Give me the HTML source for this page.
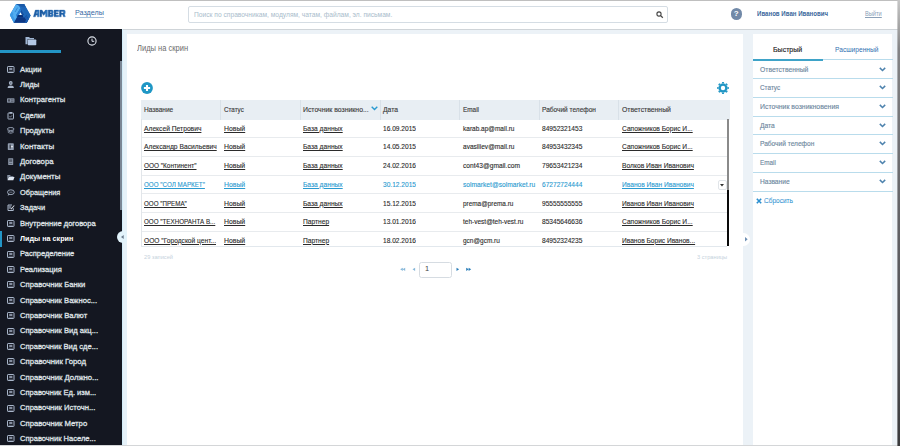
<!DOCTYPE html>
<html><head><meta charset="utf-8"><title>Amber</title>
<style>
html,body{margin:0;padding:0}
body{width:900px;height:446px;overflow:hidden;background:#ecf2f7;font-family:"Liberation Sans",sans-serif;position:relative;color:#333}
*{box-sizing:border-box}
.abs{position:absolute}
#hdr{left:0;top:0;width:900px;height:29.6px;background:#fff;border-top:1px solid #bfbfbf;border-bottom:1px solid #cfd4d8}
#side{left:0;top:29px;width:121.8px;height:415.5px;background:#141721}
.si{position:absolute;left:19.3px;font-size:8px;font-weight:bold;color:#e4e6ea;white-space:nowrap;line-height:10px;height:10px;transform:scaleX(0.876);transform-origin:0 50%}
.si.act{color:#fff}
.ic{position:absolute;left:7px;width:6px;height:7px;border:1px solid #b8c4d4;border-radius:1px}
#main{left:127px;top:33.6px;width:616px;height:411.2px;background:#fff}
#right{left:753px;top:33.6px;width:139.2px;height:411.2px;background:#fff}
.th{position:absolute;top:100px;height:18.8px;font-size:7px;line-height:18.8px;color:#444;white-space:nowrap;padding-left:3px;border-left:1px solid #dde4ea}
.td{position:absolute;font-size:7px;line-height:10px;color:#333;white-space:nowrap}
.td u{text-decoration:underline}
.rl{position:absolute;left:141px;width:586px;height:1px;background:#e8ebee}
.sel{color:#2a9ad0}
.fl{position:absolute;left:753px;width:140px;height:1px;background:#b9dcec}
.ft{position:absolute;left:760px;font-size:7px;color:#6f8fa6;line-height:10px;white-space:nowrap}
</style></head><body>

<div id="hdr" class="abs"></div>
<svg class="abs" style="left:0;top:0" width="80" height="29" viewBox="0 0 80 29">
<defs><linearGradient id="ag" x1="0" x2="1" y1="0" y2="0"><stop offset="0" stop-color="#1c579b"/><stop offset="0.7" stop-color="#2265ad"/><stop offset="1" stop-color="#3585cf"/></linearGradient></defs>
<polygon points="16.1,4.1 24.1,4.1 30.6,15.4 26.8,22.8 13.9,22.8 9.9,14.9" fill="#1f69bb"/>
<polygon points="16.1,4.1 9.9,14.9 13.9,22.8 16.9,17.6 16.3,15 20.4,8.2 18.6,5.2" fill="#52adf1"/>
<polygon points="11.9,11.5 9.9,14.9 13.9,22.8 15.3,20.4 12.7,15.2 13.5,13.9" fill="#3d9ae6"/>
<polygon points="16.1,4.1 24.1,4.1 30.6,15.4 28.6,19.2 26.3,15.2 21.6,6.8 18.6,5.2" fill="#1d66b8"/>
<polygon points="24.1,4.1 25.6,6.8 21.6,6.8 18.6,5.2 16.1,4.1" fill="#1a5aa8"/>
<polygon points="13.9,22.8 26.8,22.8 28.6,19.2 26.3,15.2 24.4,17.6 16.9,17.6" fill="#0d3784"/>
<polygon points="18.2,15 22.6,15 23.4,17.6 16.9,17.6" fill="#0a2f78"/>
<polygon points="24.4,17.6 26.3,15.2 28.6,19.2 26.8,22.8 24.8,22.8 26,19.8" fill="#1b5db2"/>
<polygon points="16.3,15 20.4,8.2 21.4,10 19.4,15" fill="#2b80d6"/><polygon points="20.4,8.2 24.2,15 22.2,15 20.6,11.6 21,10.4" fill="#174f9e"/>
<polygon points="20.5,12.3 21.8,15 19.1,15" fill="#ffffff"/>
<path d="M17.6,7.6 L15.1,12" stroke="#2474c8" stroke-width="0.6"/>
<g fill="url(#ag)" fill-rule="evenodd" stroke="#2060a8" stroke-width="0.35" stroke-linejoin="miter">
<path d="M33.4,16.8 L35.3,10.1 L39.2,10.1 L39.2,16.8 L37.4,16.8 L37.4,15.1 L35.9,15.1 L35.4,16.8 Z M36.3,13.6 L36.9,11.6 L37.4,11.6 L37.4,13.6 Z"/>
<path d="M40,16.8 V10.1 H42 L43.7,12.6 L45.4,10.1 H47.4 V16.8 H45.6 V13.1 L43.7,15.5 L41.8,13.1 V16.8 Z"/>
<path d="M48.2,10.1 H52.4 L53.2,10.9 V12.8 L52.7,13.4 L53.2,14 V16 L52.4,16.8 H48.2 Z M50,11.6 H51.5 V12.8 H50 Z M50,14.1 H51.5 V15.3 H50 Z"/>
<path d="M54.1,10.1 H58.7 V11.6 H55.9 V12.8 H58.2 V14.1 H55.9 V15.3 H58.7 V16.8 H54.1 Z"/>
<path d="M59.4,10.1 H64.4 L65.2,10.9 V13.5 L64.5,14.1 L65.3,16.8 H63.4 L62.8,14.5 H61.2 V16.8 H59.4 Z M61.2,11.6 H63.4 V13.1 H61.2 Z"/>
</g>
</svg>
<div class="abs" style="left:75px;top:9.2px;font-size:7.2px;line-height:7.6px;color:#3567a4;border-bottom:1px solid #a9c3dd">Разделы</div>
<div class="abs" style="left:187.5px;top:5.8px;width:480.7px;height:17.4px;border:1px solid #d5dde4;border-radius:2px;background:#fff"></div>
<div id="t1" class="abs" style="left:194.30px;top:9.60px;font-size:7.2px;line-height:10px;height:10px;color:#a9bccb;white-space:nowrap;transform:scaleX(0.9272);transform-origin:0 50%;">Поиск по справочникам, модулям, чатам, файлам, эл. письмам.</div>
<svg class="abs" style="left:656px;top:10.5px" width="8" height="8" viewBox="0 0 8 8"><circle cx="3" cy="3" r="2.1" fill="none" stroke="#444" stroke-width="1.1"/><line x1="4.6" y1="4.6" x2="6.8" y2="6.8" stroke="#444" stroke-width="1.3"/></svg>
<div class="abs" style="left:730.5px;top:8px;width:11.5px;height:11.5px;border-radius:50%;background:#7189a8;color:#fff;font-size:8px;font-weight:bold;line-height:11.5px;text-align:center">?</div>
<div id="t2" class="abs" style="left:756.80px;top:8.90px;font-size:7.4px;line-height:10px;height:10px;color:#3c689c;white-space:nowrap;transform:scaleX(0.8261);transform-origin:0 50%;font-weight:bold;">Иванов Иван Иванович</div>
<div id="t3" class="abs" style="left:865.40px;top:8.90px;font-size:7px;line-height:10px;height:10px;color:#8aa0b8;white-space:nowrap;transform:scaleX(0.8102);transform-origin:0 50%;text-decoration:underline;text-decoration-thickness:0.6px;text-underline-offset:0.8px;">Выйти</div>
<div id="side" class="abs"></div>
<svg class="abs" style="left:24.5px;top:35.5px" width="12" height="10" viewBox="0 0 12 10"><path d="M0.5,1 h3.5 l1,1 h4 v1.2 h-6.5 v5 h-2 z" fill="#9fb6d4"/><rect x="2.8" y="3.5" width="8.5" height="5.8" rx="0.8" fill="#b4c9e6"/></svg>
<svg class="abs" style="left:86.5px;top:35.5px" width="10" height="10" viewBox="0 0 10 10"><circle cx="5" cy="5" r="4.1" fill="none" stroke="#dde2ea" stroke-width="1.1"/><path d="M5,2.6 V5.3 H7.2" fill="none" stroke="#dde2ea" stroke-width="1"/></svg>
<div class="abs" style="left:0;top:50px;width:61px;height:2.5px;background:#2395c6"></div>
<div class="abs" style="left:119.9px;top:61.4px;width:1.9px;height:149px;background:#7b8795"></div>
<div id="t4" class="abs" style="left:19.70px;top:64.60px;font-size:7.6px;line-height:10px;height:10px;color:#dfe1e5;white-space:nowrap;transform:scaleX(1.0125);transform-origin:0 50%;-webkit-text-stroke:0.3px #dfe1e5;">Акции</div>
<svg class="abs" style="left:6.8px;top:65.80px" width="8" height="7.5" viewBox="0 0 8 7.5"><rect x="0.5" y="0.5" width="6.5" height="6" rx="0.6" fill="none" stroke="#a9b6ca" stroke-width="1"/><rect x="2.2" y="1.8" width="3.2" height="2.2" fill="#a9b6ca" opacity="0.75"/><rect x="1.5" y="4.8" width="4.5" height="0.8" fill="#a9b6ca" opacity="0.6"/></svg>
<div id="t5" class="abs" style="left:19.70px;top:80.00px;font-size:7.6px;line-height:10px;height:10px;color:#dfe1e5;white-space:nowrap;transform:scaleX(1.0144);transform-origin:0 50%;-webkit-text-stroke:0.3px #dfe1e5;">Лиды</div>
<svg class="abs" style="left:6.8px;top:81.20px" width="8" height="7.5" viewBox="0 0 8 7.5"><circle cx="3.75" cy="2" r="1.9" fill="#a9b6ca"/><circle cx="3.75" cy="2" r="0.8" fill="#15171e" opacity="0.5"/><path d="M0.6,7 Q0.8,4.6 3.75,4.6 Q6.7,4.6 6.9,7 Z" fill="#a9b6ca"/></svg>
<div id="t6" class="abs" style="left:19.70px;top:95.40px;font-size:7.6px;line-height:10px;height:10px;color:#dfe1e5;white-space:nowrap;transform:scaleX(1.0104);transform-origin:0 50%;-webkit-text-stroke:0.3px #dfe1e5;">Контрагенты</div>
<svg class="abs" style="left:6.8px;top:96.60px" width="8" height="7.5" viewBox="0 0 8 7.5"><rect x="0" y="1.3" width="7.5" height="4.4" rx="0.6" fill="#a9b6ca" opacity="0.75"/><rect x="1" y="2.3" width="2" height="2.2" fill="#15171e" opacity="0.55"/><rect x="4" y="2.5" width="2.5" height="0.7" fill="#15171e" opacity="0.5"/><rect x="4" y="3.9" width="2.5" height="0.7" fill="#15171e" opacity="0.5"/></svg>
<div id="t7" class="abs" style="left:19.70px;top:110.80px;font-size:7.6px;line-height:10px;height:10px;color:#dfe1e5;white-space:nowrap;transform:scaleX(0.9695);transform-origin:0 50%;-webkit-text-stroke:0.3px #dfe1e5;">Сделки</div>
<svg class="abs" style="left:6.8px;top:112.00px" width="8" height="7.5" viewBox="0 0 8 7.5"><rect x="1" y="1" width="5.5" height="6" rx="0.5" fill="none" stroke="#a9b6ca" stroke-width="1"/><rect x="2.5" y="0" width="2.5" height="1.6" fill="#a9b6ca"/><path d="M2.6,4.4 L3.4,5.2 L5,3.4" fill="none" stroke="#a9b6ca" stroke-width="0.7"/></svg>
<div id="t8" class="abs" style="left:19.70px;top:126.20px;font-size:7.6px;line-height:10px;height:10px;color:#dfe1e5;white-space:nowrap;transform:scaleX(0.9938);transform-origin:0 50%;-webkit-text-stroke:0.3px #dfe1e5;">Продукты</div>
<svg class="abs" style="left:6.8px;top:127.40px" width="8" height="7.5" viewBox="0 0 8 7.5"><ellipse cx="3.75" cy="2" rx="3.3" ry="1.5" fill="none" stroke="#a9b6ca" stroke-width="0.9" opacity="0.9"/><path d="M0.5,3.8 Q3.75,6.2 7,3.8" fill="none" stroke="#a9b6ca" stroke-width="0.9" opacity="0.85"/><path d="M0.8,5.3 Q3.75,7.6 6.7,5.3" fill="none" stroke="#a9b6ca" stroke-width="0.9" opacity="0.7"/></svg>
<div id="t9" class="abs" style="left:19.70px;top:141.60px;font-size:7.6px;line-height:10px;height:10px;color:#dfe1e5;white-space:nowrap;transform:scaleX(1.0392);transform-origin:0 50%;-webkit-text-stroke:0.3px #dfe1e5;">Контакты</div>
<svg class="abs" style="left:6.8px;top:142.80px" width="8" height="7.5" viewBox="0 0 8 7.5"><rect x="0.8" y="0.3" width="6" height="6.8" rx="0.8" fill="#a9b6ca" opacity="0.85"/><rect x="2.4" y="1.6" width="1.6" height="4" fill="#15171e" opacity="0.55"/><rect x="4" y="3" width="2" height="1.2" fill="#fff" opacity="0.7"/></svg>
<div id="t10" class="abs" style="left:19.70px;top:157.00px;font-size:7.6px;line-height:10px;height:10px;color:#dfe1e5;white-space:nowrap;transform:scaleX(1.0180);transform-origin:0 50%;-webkit-text-stroke:0.3px #dfe1e5;">Договора</div>
<svg class="abs" style="left:6.8px;top:158.20px" width="8" height="7.5" viewBox="0 0 8 7.5"><rect x="1.2" y="0.3" width="5" height="6.8" rx="0.5" fill="#a9b6ca" opacity="0.8"/><rect x="2.2" y="1.3" width="3" height="2.6" fill="#15171e" opacity="0.45"/><rect x="2.2" y="5" width="3" height="0.8" fill="#15171e" opacity="0.45"/></svg>
<div id="t11" class="abs" style="left:19.70px;top:172.40px;font-size:7.6px;line-height:10px;height:10px;color:#dfe1e5;white-space:nowrap;transform:scaleX(1.0292);transform-origin:0 50%;-webkit-text-stroke:0.3px #dfe1e5;">Документы</div>
<svg class="abs" style="left:6.8px;top:173.60px" width="8" height="7.5" viewBox="0 0 8 7.5"><path d="M0.3,1 H3 L3.8,1.9 H6.4 V2.7 H1.5 L0.3,6 Z" fill="#a9b6ca" opacity="0.8"/><path d="M1.7,3 H7.5 L6.3,6.3 H0.5 Z" fill="#dfe7f3"/></svg>
<div id="t12" class="abs" style="left:19.70px;top:187.80px;font-size:7.6px;line-height:10px;height:10px;color:#dfe1e5;white-space:nowrap;transform:scaleX(0.9678);transform-origin:0 50%;-webkit-text-stroke:0.3px #dfe1e5;">Обращения</div>
<svg class="abs" style="left:6.8px;top:189.00px" width="8" height="7.5" viewBox="0 0 8 7.5"><ellipse cx="3.9" cy="3.2" rx="3.4" ry="2.4" fill="none" stroke="#a9b6ca" stroke-width="0.9"/><path d="M1.5,4.8 L0.6,6.8 L3,5.5 Z" fill="#a9b6ca"/><path d="M2.3,3.2 H5.5" stroke="#a9b6ca" stroke-width="0.7" opacity="0.8"/></svg>
<div id="t13" class="abs" style="left:19.70px;top:203.20px;font-size:7.6px;line-height:10px;height:10px;color:#dfe1e5;white-space:nowrap;transform:scaleX(0.9843);transform-origin:0 50%;-webkit-text-stroke:0.3px #dfe1e5;">Задачи</div>
<svg class="abs" style="left:6.8px;top:204.40px" width="8" height="7.5" viewBox="0 0 8 7.5"><path d="M5,1 H1 V6.5 H6.3 V4.2" fill="none" stroke="#a9b6ca" stroke-width="1"/><rect x="1.6" y="1.6" width="2.6" height="3.2" fill="#a9b6ca" opacity="0.6"/><path d="M3.6,4.9 L7,1.2 L7.6,1.8 L4.3,5.5 Z" fill="#e8eef8"/></svg>
<div id="t14" class="abs" style="left:19.70px;top:218.60px;font-size:7.6px;line-height:10px;height:10px;color:#dfe1e5;white-space:nowrap;transform:scaleX(0.9954);transform-origin:0 50%;-webkit-text-stroke:0.3px #dfe1e5;">Внутренние договора</div>
<svg class="abs" style="left:6.8px;top:219.80px" width="8" height="7.5" viewBox="0 0 8 7.5"><rect x="0.5" y="0.5" width="6.5" height="6" rx="0.6" fill="none" stroke="#a9b6ca" stroke-width="1"/><rect x="2.2" y="1.8" width="3.2" height="2.2" fill="#a9b6ca" opacity="0.75"/><rect x="1.5" y="4.8" width="4.5" height="0.8" fill="#a9b6ca" opacity="0.6"/></svg>
<div id="t15" class="abs" style="left:19.70px;top:234.00px;font-size:7.6px;line-height:10px;height:10px;color:#ffffff;white-space:nowrap;transform:scaleX(0.9476);transform-origin:0 50%;font-weight:bold;">Лиды на скрин</div>
<svg class="abs" style="left:6.8px;top:235.20px" width="8" height="7.5" viewBox="0 0 8 7.5"><rect x="0.5" y="0.5" width="6.5" height="6" rx="0.6" fill="none" stroke="#a9b6ca" stroke-width="1"/><rect x="2.2" y="1.8" width="3.2" height="2.2" fill="#a9b6ca" opacity="0.75"/><rect x="1.5" y="4.8" width="4.5" height="0.8" fill="#a9b6ca" opacity="0.6"/></svg>
<div id="t16" class="abs" style="left:19.70px;top:249.40px;font-size:7.6px;line-height:10px;height:10px;color:#dfe1e5;white-space:nowrap;transform:scaleX(0.9881);transform-origin:0 50%;-webkit-text-stroke:0.3px #dfe1e5;">Распределение</div>
<svg class="abs" style="left:6.8px;top:250.60px" width="8" height="7.5" viewBox="0 0 8 7.5"><rect x="0.5" y="0.5" width="6.5" height="6" rx="0.6" fill="none" stroke="#a9b6ca" stroke-width="1"/><rect x="2.2" y="1.8" width="3.2" height="2.2" fill="#a9b6ca" opacity="0.75"/><rect x="1.5" y="4.8" width="4.5" height="0.8" fill="#a9b6ca" opacity="0.6"/></svg>
<div id="t17" class="abs" style="left:19.70px;top:264.80px;font-size:7.6px;line-height:10px;height:10px;color:#dfe1e5;white-space:nowrap;transform:scaleX(0.9890);transform-origin:0 50%;-webkit-text-stroke:0.3px #dfe1e5;">Реализация</div>
<svg class="abs" style="left:6.8px;top:266.00px" width="8" height="7.5" viewBox="0 0 8 7.5"><rect x="0.5" y="0.5" width="6.5" height="6" rx="0.6" fill="none" stroke="#a9b6ca" stroke-width="1"/><rect x="2.2" y="1.8" width="3.2" height="2.2" fill="#a9b6ca" opacity="0.75"/><rect x="1.5" y="4.8" width="4.5" height="0.8" fill="#a9b6ca" opacity="0.6"/></svg>
<div id="t18" class="abs" style="left:19.70px;top:280.20px;font-size:7.6px;line-height:10px;height:10px;color:#dfe1e5;white-space:nowrap;transform:scaleX(1.0086);transform-origin:0 50%;-webkit-text-stroke:0.3px #dfe1e5;">Справочник Банки</div>
<svg class="abs" style="left:6.8px;top:281.40px" width="8" height="7.5" viewBox="0 0 8 7.5"><rect x="0.5" y="0.5" width="6.5" height="6" rx="0.6" fill="none" stroke="#a9b6ca" stroke-width="1"/><rect x="2.2" y="1.8" width="3.2" height="2.2" fill="#a9b6ca" opacity="0.75"/><rect x="1.5" y="4.8" width="4.5" height="0.8" fill="#a9b6ca" opacity="0.6"/></svg>
<div id="t19" class="abs" style="left:19.70px;top:295.60px;font-size:7.6px;line-height:10px;height:10px;color:#dfe1e5;white-space:nowrap;transform:scaleX(1.0039);transform-origin:0 50%;-webkit-text-stroke:0.3px #dfe1e5;">Справочник Важнос...</div>
<svg class="abs" style="left:6.8px;top:296.80px" width="8" height="7.5" viewBox="0 0 8 7.5"><rect x="0.5" y="0.5" width="6.5" height="6" rx="0.6" fill="none" stroke="#a9b6ca" stroke-width="1"/><rect x="2.2" y="1.8" width="3.2" height="2.2" fill="#a9b6ca" opacity="0.75"/><rect x="1.5" y="4.8" width="4.5" height="0.8" fill="#a9b6ca" opacity="0.6"/></svg>
<div id="t20" class="abs" style="left:19.70px;top:311.00px;font-size:7.6px;line-height:10px;height:10px;color:#dfe1e5;white-space:nowrap;transform:scaleX(1.0089);transform-origin:0 50%;-webkit-text-stroke:0.3px #dfe1e5;">Справочник Валют</div>
<svg class="abs" style="left:6.8px;top:312.20px" width="8" height="7.5" viewBox="0 0 8 7.5"><rect x="0.5" y="0.5" width="6.5" height="6" rx="0.6" fill="none" stroke="#a9b6ca" stroke-width="1"/><rect x="2.2" y="1.8" width="3.2" height="2.2" fill="#a9b6ca" opacity="0.75"/><rect x="1.5" y="4.8" width="4.5" height="0.8" fill="#a9b6ca" opacity="0.6"/></svg>
<div id="t21" class="abs" style="left:19.70px;top:326.40px;font-size:7.6px;line-height:10px;height:10px;color:#dfe1e5;white-space:nowrap;transform:scaleX(1.0006);transform-origin:0 50%;-webkit-text-stroke:0.3px #dfe1e5;">Справочник Вид акц...</div>
<svg class="abs" style="left:6.8px;top:327.60px" width="8" height="7.5" viewBox="0 0 8 7.5"><rect x="0.5" y="0.5" width="6.5" height="6" rx="0.6" fill="none" stroke="#a9b6ca" stroke-width="1"/><rect x="2.2" y="1.8" width="3.2" height="2.2" fill="#a9b6ca" opacity="0.75"/><rect x="1.5" y="4.8" width="4.5" height="0.8" fill="#a9b6ca" opacity="0.6"/></svg>
<div id="t22" class="abs" style="left:19.70px;top:341.80px;font-size:7.6px;line-height:10px;height:10px;color:#dfe1e5;white-space:nowrap;transform:scaleX(0.9936);transform-origin:0 50%;-webkit-text-stroke:0.3px #dfe1e5;">Справочник Вид сде...</div>
<svg class="abs" style="left:6.8px;top:343.00px" width="8" height="7.5" viewBox="0 0 8 7.5"><rect x="0.5" y="0.5" width="6.5" height="6" rx="0.6" fill="none" stroke="#a9b6ca" stroke-width="1"/><rect x="2.2" y="1.8" width="3.2" height="2.2" fill="#a9b6ca" opacity="0.75"/><rect x="1.5" y="4.8" width="4.5" height="0.8" fill="#a9b6ca" opacity="0.6"/></svg>
<div id="t23" class="abs" style="left:19.70px;top:357.20px;font-size:7.6px;line-height:10px;height:10px;color:#dfe1e5;white-space:nowrap;transform:scaleX(1.0245);transform-origin:0 50%;-webkit-text-stroke:0.3px #dfe1e5;">Справочник Город</div>
<svg class="abs" style="left:6.8px;top:358.40px" width="8" height="7.5" viewBox="0 0 8 7.5"><rect x="0.5" y="0.5" width="6.5" height="6" rx="0.6" fill="none" stroke="#a9b6ca" stroke-width="1"/><rect x="2.2" y="1.8" width="3.2" height="2.2" fill="#a9b6ca" opacity="0.75"/><rect x="1.5" y="4.8" width="4.5" height="0.8" fill="#a9b6ca" opacity="0.6"/></svg>
<div id="t24" class="abs" style="left:19.70px;top:372.60px;font-size:7.6px;line-height:10px;height:10px;color:#dfe1e5;white-space:nowrap;transform:scaleX(1.0139);transform-origin:0 50%;-webkit-text-stroke:0.3px #dfe1e5;">Справочник Должно...</div>
<svg class="abs" style="left:6.8px;top:373.80px" width="8" height="7.5" viewBox="0 0 8 7.5"><rect x="0.5" y="0.5" width="6.5" height="6" rx="0.6" fill="none" stroke="#a9b6ca" stroke-width="1"/><rect x="2.2" y="1.8" width="3.2" height="2.2" fill="#a9b6ca" opacity="0.75"/><rect x="1.5" y="4.8" width="4.5" height="0.8" fill="#a9b6ca" opacity="0.6"/></svg>
<div id="t25" class="abs" style="left:19.70px;top:388.00px;font-size:7.6px;line-height:10px;height:10px;color:#dfe1e5;white-space:nowrap;transform:scaleX(0.9912);transform-origin:0 50%;-webkit-text-stroke:0.3px #dfe1e5;">Справочник Ед. изм...</div>
<svg class="abs" style="left:6.8px;top:389.20px" width="8" height="7.5" viewBox="0 0 8 7.5"><rect x="0.5" y="0.5" width="6.5" height="6" rx="0.6" fill="none" stroke="#a9b6ca" stroke-width="1"/><rect x="2.2" y="1.8" width="3.2" height="2.2" fill="#a9b6ca" opacity="0.75"/><rect x="1.5" y="4.8" width="4.5" height="0.8" fill="#a9b6ca" opacity="0.6"/></svg>
<div id="t26" class="abs" style="left:19.70px;top:403.40px;font-size:7.6px;line-height:10px;height:10px;color:#dfe1e5;white-space:nowrap;transform:scaleX(1.0032);transform-origin:0 50%;-webkit-text-stroke:0.3px #dfe1e5;">Справочник Источн...</div>
<svg class="abs" style="left:6.8px;top:404.60px" width="8" height="7.5" viewBox="0 0 8 7.5"><rect x="0.5" y="0.5" width="6.5" height="6" rx="0.6" fill="none" stroke="#a9b6ca" stroke-width="1"/><rect x="2.2" y="1.8" width="3.2" height="2.2" fill="#a9b6ca" opacity="0.75"/><rect x="1.5" y="4.8" width="4.5" height="0.8" fill="#a9b6ca" opacity="0.6"/></svg>
<div id="t27" class="abs" style="left:19.70px;top:418.80px;font-size:7.6px;line-height:10px;height:10px;color:#dfe1e5;white-space:nowrap;transform:scaleX(1.0153);transform-origin:0 50%;-webkit-text-stroke:0.3px #dfe1e5;">Справочник Метро</div>
<svg class="abs" style="left:6.8px;top:420.00px" width="8" height="7.5" viewBox="0 0 8 7.5"><rect x="0.5" y="0.5" width="6.5" height="6" rx="0.6" fill="none" stroke="#a9b6ca" stroke-width="1"/><rect x="2.2" y="1.8" width="3.2" height="2.2" fill="#a9b6ca" opacity="0.75"/><rect x="1.5" y="4.8" width="4.5" height="0.8" fill="#a9b6ca" opacity="0.6"/></svg>
<div id="t28" class="abs" style="left:19.70px;top:434.20px;font-size:7.6px;line-height:10px;height:10px;color:#dfe1e5;white-space:nowrap;transform:scaleX(0.9929);transform-origin:0 50%;-webkit-text-stroke:0.3px #dfe1e5;">Справочник Населе...</div>
<svg class="abs" style="left:6.8px;top:435.40px" width="8" height="7.5" viewBox="0 0 8 7.5"><rect x="0.5" y="0.5" width="6.5" height="6" rx="0.6" fill="none" stroke="#a9b6ca" stroke-width="1"/><rect x="2.2" y="1.8" width="3.2" height="2.2" fill="#a9b6ca" opacity="0.75"/><rect x="1.5" y="4.8" width="4.5" height="0.8" fill="#a9b6ca" opacity="0.6"/></svg>
<div class="abs" style="left:0;top:231.00px;width:2.2px;height:15.6px;background:#2395c6"></div>
<div class="abs" style="left:121.8px;top:30px;width:5.2px;height:415px;background:#e6f2f9"></div>
<div class="abs" style="left:121.8px;top:29px;width:1.6px;height:416px;background:#d3edf9"></div>
<div class="abs" style="left:117.1px;top:230.8px;width:12.4px;height:12.4px;border-radius:50%;background:#e2f3fb"></div>
<svg class="abs" style="left:120.6px;top:235.3px" width="3" height="4" viewBox="0 0 3 4"><path d="M2.7,0 L0,2 L2.7,4 Z" fill="#6a7a8c"/></svg>
<div id="main" class="abs"></div>
<div id="t29" class="abs" style="left:136.70px;top:43.60px;font-size:8.2px;line-height:10px;height:10px;color:#6c6c6c;white-space:nowrap;transform:scaleX(0.9215);transform-origin:0 50%;">Лиды на скрин</div>
<svg class="abs" style="left:141.3px;top:81.7px" width="12" height="12" viewBox="0 0 12 12"><circle cx="6" cy="6" r="5.9" fill="#1f97c5"/><path d="M6,2.9 V9.1 M2.9,6 H9.1" stroke="#fff" stroke-width="2.1"/></svg>
<svg class="abs" style="left:717.25px;top:81.8px" width="12" height="12" viewBox="0 0 12 12"><g fill="#2196c4"><circle cx="6" cy="6" r="4.5"/><polygon points="4.7,1.6 5.2,0.1 6.8,0.1 7.3,1.6" transform="rotate(0 6 6)"/><polygon points="4.7,1.6 5.2,0.1 6.8,0.1 7.3,1.6" transform="rotate(45 6 6)"/><polygon points="4.7,1.6 5.2,0.1 6.8,0.1 7.3,1.6" transform="rotate(90 6 6)"/><polygon points="4.7,1.6 5.2,0.1 6.8,0.1 7.3,1.6" transform="rotate(135 6 6)"/><polygon points="4.7,1.6 5.2,0.1 6.8,0.1 7.3,1.6" transform="rotate(180 6 6)"/><polygon points="4.7,1.6 5.2,0.1 6.8,0.1 7.3,1.6" transform="rotate(225 6 6)"/><polygon points="4.7,1.6 5.2,0.1 6.8,0.1 7.3,1.6" transform="rotate(270 6 6)"/><polygon points="4.7,1.6 5.2,0.1 6.8,0.1 7.3,1.6" transform="rotate(315 6 6)"/></g><circle cx="6" cy="6" r="2.2" fill="#fff"/></svg>
<div class="abs" style="left:141px;top:99.7px;width:588.8px;height:19.9px;background:#e8eef3"></div>
<div class="abs" style="left:220.4px;top:99.7px;width:1px;height:19.9px;background:#d9e1e8"></div>
<div class="abs" style="left:299.7px;top:99.7px;width:1px;height:19.9px;background:#d9e1e8"></div>
<div class="abs" style="left:379.7px;top:99.7px;width:1px;height:19.9px;background:#d9e1e8"></div>
<div class="abs" style="left:459.4px;top:99.7px;width:1px;height:19.9px;background:#d9e1e8"></div>
<div class="abs" style="left:538.5px;top:99.7px;width:1px;height:19.9px;background:#d9e1e8"></div>
<div class="abs" style="left:617.7px;top:99.7px;width:1px;height:19.9px;background:#d9e1e8"></div>
<div id="t30" class="abs" style="left:144.40px;top:105.10px;font-size:7.4px;line-height:10px;height:10px;color:#3c3c3c;white-space:nowrap;transform:scaleX(0.8840);transform-origin:0 50%;-webkit-text-stroke:0.15px #3c3c3c;">Название</div>
<div id="t31" class="abs" style="left:224.00px;top:105.10px;font-size:7.4px;line-height:10px;height:10px;color:#3c3c3c;white-space:nowrap;transform:scaleX(0.8471);transform-origin:0 50%;-webkit-text-stroke:0.15px #3c3c3c;">Статус</div>
<div id="t32" class="abs" style="left:303.30px;top:105.10px;font-size:7.4px;line-height:10px;height:10px;color:#3c3c3c;white-space:nowrap;transform:scaleX(0.9296);transform-origin:0 50%;-webkit-text-stroke:0.15px #3c3c3c;">Источник возникно...</div>
<div id="t33" class="abs" style="left:383.00px;top:105.10px;font-size:7.4px;line-height:10px;height:10px;color:#3c3c3c;white-space:nowrap;transform:scaleX(0.9160);transform-origin:0 50%;-webkit-text-stroke:0.15px #3c3c3c;">Дата</div>
<div id="t34" class="abs" style="left:462.65px;top:105.10px;font-size:7.4px;line-height:10px;height:10px;color:#3c3c3c;white-space:nowrap;transform:scaleX(0.8656);transform-origin:0 50%;-webkit-text-stroke:0.15px #3c3c3c;">Email</div>
<div id="t35" class="abs" style="left:542.30px;top:105.10px;font-size:7.4px;line-height:10px;height:10px;color:#3c3c3c;white-space:nowrap;transform:scaleX(0.8836);transform-origin:0 50%;-webkit-text-stroke:0.15px #3c3c3c;">Рабочий телефон</div>
<div id="t36" class="abs" style="left:621.80px;top:105.10px;font-size:7.4px;line-height:10px;height:10px;color:#3c3c3c;white-space:nowrap;transform:scaleX(0.9265);transform-origin:0 50%;-webkit-text-stroke:0.15px #3c3c3c;">Ответственный</div>
<svg class="abs" style="left:370.6px;top:106.4px" width="7" height="5" viewBox="0 0 7 5"><path d="M0.7,0.8 L3.5,3.6 L6.3,0.8" fill="none" stroke="#2a9ad0" stroke-width="1.4"/></svg>
<div id="t37" class="abs" style="left:144.40px;top:123.80px;font-size:7.4px;line-height:10px;height:10px;color:#2b2b2b;white-space:nowrap;transform:scaleX(0.9062);transform-origin:0 50%;text-decoration:underline;text-decoration-thickness:0.6px;text-underline-offset:0.6px;-webkit-text-stroke:0.12px #2b2b2b;">Алексей Петрович</div>
<div id="t38" class="abs" style="left:224.00px;top:123.80px;font-size:7.4px;line-height:10px;height:10px;color:#2b2b2b;white-space:nowrap;transform:scaleX(0.9287);transform-origin:0 50%;text-decoration:underline;text-decoration-thickness:0.6px;text-underline-offset:0.6px;-webkit-text-stroke:0.12px #2b2b2b;">Новый</div>
<div id="t39" class="abs" style="left:303.30px;top:123.80px;font-size:7.4px;line-height:10px;height:10px;color:#2b2b2b;white-space:nowrap;transform:scaleX(0.9016);transform-origin:0 50%;text-decoration:underline;text-decoration-thickness:0.6px;text-underline-offset:0.6px;-webkit-text-stroke:0.12px #2b2b2b;">База данных</div>
<div id="t40" class="abs" style="left:383.00px;top:123.80px;font-size:7.4px;line-height:10px;height:10px;color:#2b2b2b;white-space:nowrap;transform:scaleX(0.8919);transform-origin:0 50%;-webkit-text-stroke:0.12px #2b2b2b;">16.09.2015</div>
<div id="t41" class="abs" style="left:462.65px;top:123.80px;font-size:7.4px;line-height:10px;height:10px;color:#2b2b2b;white-space:nowrap;transform:scaleX(0.8810);transform-origin:0 50%;-webkit-text-stroke:0.12px #2b2b2b;">karab.ap@mail.ru</div>
<div id="t42" class="abs" style="left:542.30px;top:123.80px;font-size:7.4px;line-height:10px;height:10px;color:#2b2b2b;white-space:nowrap;transform:scaleX(0.8912);transform-origin:0 50%;-webkit-text-stroke:0.12px #2b2b2b;">84952321453</div>
<div id="t43" class="abs" style="left:621.80px;top:123.80px;font-size:7.4px;line-height:10px;height:10px;color:#2b2b2b;white-space:nowrap;transform:scaleX(0.9001);transform-origin:0 50%;text-decoration:underline;text-decoration-thickness:0.6px;text-underline-offset:0.6px;-webkit-text-stroke:0.12px #2b2b2b;">Сапожников Борис И...</div>
<div class="rl" style="top:137.30px"></div>
<div id="t44" class="abs" style="left:144.40px;top:142.48px;font-size:7.4px;line-height:10px;height:10px;color:#2b2b2b;white-space:nowrap;transform:scaleX(0.9079);transform-origin:0 50%;text-decoration:underline;text-decoration-thickness:0.6px;text-underline-offset:0.6px;-webkit-text-stroke:0.12px #2b2b2b;">Александр Васильевич</div>
<div id="t45" class="abs" style="left:224.00px;top:142.48px;font-size:7.4px;line-height:10px;height:10px;color:#2b2b2b;white-space:nowrap;transform:scaleX(0.9287);transform-origin:0 50%;text-decoration:underline;text-decoration-thickness:0.6px;text-underline-offset:0.6px;-webkit-text-stroke:0.12px #2b2b2b;">Новый</div>
<div id="t46" class="abs" style="left:303.30px;top:142.48px;font-size:7.4px;line-height:10px;height:10px;color:#2b2b2b;white-space:nowrap;transform:scaleX(0.9016);transform-origin:0 50%;text-decoration:underline;text-decoration-thickness:0.6px;text-underline-offset:0.6px;-webkit-text-stroke:0.12px #2b2b2b;">База данных</div>
<div id="t47" class="abs" style="left:383.00px;top:142.48px;font-size:7.4px;line-height:10px;height:10px;color:#2b2b2b;white-space:nowrap;transform:scaleX(0.8919);transform-origin:0 50%;-webkit-text-stroke:0.12px #2b2b2b;">14.05.2015</div>
<div id="t48" class="abs" style="left:462.65px;top:142.48px;font-size:7.4px;line-height:10px;height:10px;color:#2b2b2b;white-space:nowrap;transform:scaleX(0.8875);transform-origin:0 50%;-webkit-text-stroke:0.12px #2b2b2b;">avasiliev@mail.ru</div>
<div id="t49" class="abs" style="left:542.30px;top:142.48px;font-size:7.4px;line-height:10px;height:10px;color:#2b2b2b;white-space:nowrap;transform:scaleX(0.8912);transform-origin:0 50%;-webkit-text-stroke:0.12px #2b2b2b;">84953432345</div>
<div id="t50" class="abs" style="left:621.80px;top:142.48px;font-size:7.4px;line-height:10px;height:10px;color:#2b2b2b;white-space:nowrap;transform:scaleX(0.9001);transform-origin:0 50%;text-decoration:underline;text-decoration-thickness:0.6px;text-underline-offset:0.6px;-webkit-text-stroke:0.12px #2b2b2b;">Сапожников Борис И...</div>
<div class="rl" style="top:156.00px"></div>
<div id="t51" class="abs" style="left:144.40px;top:161.16px;font-size:7.4px;line-height:10px;height:10px;color:#2b2b2b;white-space:nowrap;transform:scaleX(0.8718);transform-origin:0 50%;text-decoration:underline;text-decoration-thickness:0.6px;text-underline-offset:0.6px;-webkit-text-stroke:0.12px #2b2b2b;">ООО "Континент"</div>
<div id="t52" class="abs" style="left:224.00px;top:161.16px;font-size:7.4px;line-height:10px;height:10px;color:#2b2b2b;white-space:nowrap;transform:scaleX(0.9287);transform-origin:0 50%;text-decoration:underline;text-decoration-thickness:0.6px;text-underline-offset:0.6px;-webkit-text-stroke:0.12px #2b2b2b;">Новый</div>
<div id="t53" class="abs" style="left:303.30px;top:161.16px;font-size:7.4px;line-height:10px;height:10px;color:#2b2b2b;white-space:nowrap;transform:scaleX(0.9016);transform-origin:0 50%;text-decoration:underline;text-decoration-thickness:0.6px;text-underline-offset:0.6px;-webkit-text-stroke:0.12px #2b2b2b;">База данных</div>
<div id="t54" class="abs" style="left:383.00px;top:161.16px;font-size:7.4px;line-height:10px;height:10px;color:#2b2b2b;white-space:nowrap;transform:scaleX(0.8919);transform-origin:0 50%;-webkit-text-stroke:0.12px #2b2b2b;">24.02.2016</div>
<div id="t55" class="abs" style="left:462.65px;top:161.16px;font-size:7.4px;line-height:10px;height:10px;color:#2b2b2b;white-space:nowrap;transform:scaleX(0.8994);transform-origin:0 50%;-webkit-text-stroke:0.12px #2b2b2b;">cont43@gmail.com</div>
<div id="t56" class="abs" style="left:542.30px;top:161.16px;font-size:7.4px;line-height:10px;height:10px;color:#2b2b2b;white-space:nowrap;transform:scaleX(0.8912);transform-origin:0 50%;-webkit-text-stroke:0.12px #2b2b2b;">79653421234</div>
<div id="t57" class="abs" style="left:621.80px;top:161.16px;font-size:7.4px;line-height:10px;height:10px;color:#2b2b2b;white-space:nowrap;transform:scaleX(0.9060);transform-origin:0 50%;text-decoration:underline;text-decoration-thickness:0.6px;text-underline-offset:0.6px;-webkit-text-stroke:0.12px #2b2b2b;">Волков Иван Иванович</div>
<div class="rl" style="top:174.70px"></div>
<div id="t58" class="abs" style="left:144.40px;top:179.84px;font-size:7.4px;line-height:10px;height:10px;color:#2a9ad0;white-space:nowrap;transform:scaleX(0.8451);transform-origin:0 50%;text-decoration:underline;text-decoration-thickness:0.6px;text-underline-offset:0.6px;-webkit-text-stroke:0.12px #2a9ad0;">ООО "СОЛ МАРКЕТ"</div>
<div id="t59" class="abs" style="left:224.00px;top:179.84px;font-size:7.4px;line-height:10px;height:10px;color:#2a9ad0;white-space:nowrap;transform:scaleX(0.9287);transform-origin:0 50%;text-decoration:underline;text-decoration-thickness:0.6px;text-underline-offset:0.6px;-webkit-text-stroke:0.12px #2a9ad0;">Новый</div>
<div id="t60" class="abs" style="left:303.30px;top:179.84px;font-size:7.4px;line-height:10px;height:10px;color:#2a9ad0;white-space:nowrap;transform:scaleX(0.9016);transform-origin:0 50%;text-decoration:underline;text-decoration-thickness:0.6px;text-underline-offset:0.6px;-webkit-text-stroke:0.12px #2a9ad0;">База данных</div>
<div id="t61" class="abs" style="left:383.00px;top:179.84px;font-size:7.4px;line-height:10px;height:10px;color:#2a9ad0;white-space:nowrap;transform:scaleX(0.8919);transform-origin:0 50%;-webkit-text-stroke:0.12px #2a9ad0;">30.12.2015</div>
<div id="t62" class="abs" style="left:462.65px;top:179.84px;font-size:7.4px;line-height:10px;height:10px;color:#2a9ad0;white-space:nowrap;transform:scaleX(0.9015);transform-origin:0 50%;-webkit-text-stroke:0.12px #2a9ad0;">solmarket@solmarket.ru</div>
<div id="t63" class="abs" style="left:542.30px;top:179.84px;font-size:7.4px;line-height:10px;height:10px;color:#2a9ad0;white-space:nowrap;transform:scaleX(0.8912);transform-origin:0 50%;-webkit-text-stroke:0.12px #2a9ad0;">67272724444</div>
<div id="t64" class="abs" style="left:621.80px;top:179.84px;font-size:7.4px;line-height:10px;height:10px;color:#2a9ad0;white-space:nowrap;transform:scaleX(0.8965);transform-origin:0 50%;text-decoration:underline;text-decoration-thickness:0.6px;text-underline-offset:0.6px;-webkit-text-stroke:0.12px #2a9ad0;">Иванов Иван Иванович</div>
<div class="rl" style="top:193.40px"></div>
<div id="t65" class="abs" style="left:144.40px;top:198.52px;font-size:7.4px;line-height:10px;height:10px;color:#2b2b2b;white-space:nowrap;transform:scaleX(0.8423);transform-origin:0 50%;text-decoration:underline;text-decoration-thickness:0.6px;text-underline-offset:0.6px;-webkit-text-stroke:0.12px #2b2b2b;">ООО "ПРЕМА"</div>
<div id="t66" class="abs" style="left:224.00px;top:198.52px;font-size:7.4px;line-height:10px;height:10px;color:#2b2b2b;white-space:nowrap;transform:scaleX(0.9287);transform-origin:0 50%;text-decoration:underline;text-decoration-thickness:0.6px;text-underline-offset:0.6px;-webkit-text-stroke:0.12px #2b2b2b;">Новый</div>
<div id="t67" class="abs" style="left:303.30px;top:198.52px;font-size:7.4px;line-height:10px;height:10px;color:#2b2b2b;white-space:nowrap;transform:scaleX(0.9016);transform-origin:0 50%;text-decoration:underline;text-decoration-thickness:0.6px;text-underline-offset:0.6px;-webkit-text-stroke:0.12px #2b2b2b;">База данных</div>
<div id="t68" class="abs" style="left:383.00px;top:198.52px;font-size:7.4px;line-height:10px;height:10px;color:#2b2b2b;white-space:nowrap;transform:scaleX(0.8919);transform-origin:0 50%;-webkit-text-stroke:0.12px #2b2b2b;">15.12.2015</div>
<div id="t69" class="abs" style="left:462.65px;top:198.52px;font-size:7.4px;line-height:10px;height:10px;color:#2b2b2b;white-space:nowrap;transform:scaleX(0.8685);transform-origin:0 50%;-webkit-text-stroke:0.12px #2b2b2b;">prema@prema.ru</div>
<div id="t70" class="abs" style="left:542.30px;top:198.52px;font-size:7.4px;line-height:10px;height:10px;color:#2b2b2b;white-space:nowrap;transform:scaleX(0.8912);transform-origin:0 50%;-webkit-text-stroke:0.12px #2b2b2b;">95555555555</div>
<div id="t71" class="abs" style="left:621.80px;top:198.52px;font-size:7.4px;line-height:10px;height:10px;color:#2b2b2b;white-space:nowrap;transform:scaleX(0.8965);transform-origin:0 50%;text-decoration:underline;text-decoration-thickness:0.6px;text-underline-offset:0.6px;-webkit-text-stroke:0.12px #2b2b2b;">Иванов Иван Иванович</div>
<div class="rl" style="top:212.10px"></div>
<div id="t72" class="abs" style="left:144.40px;top:217.20px;font-size:7.4px;line-height:10px;height:10px;color:#2b2b2b;white-space:nowrap;transform:scaleX(0.8444);transform-origin:0 50%;text-decoration:underline;text-decoration-thickness:0.6px;text-underline-offset:0.6px;-webkit-text-stroke:0.12px #2b2b2b;">ООО "ТЕХНОРАНТА В...</div>
<div id="t73" class="abs" style="left:224.00px;top:217.20px;font-size:7.4px;line-height:10px;height:10px;color:#2b2b2b;white-space:nowrap;transform:scaleX(0.9287);transform-origin:0 50%;text-decoration:underline;text-decoration-thickness:0.6px;text-underline-offset:0.6px;-webkit-text-stroke:0.12px #2b2b2b;">Новый</div>
<div id="t74" class="abs" style="left:303.30px;top:217.20px;font-size:7.4px;line-height:10px;height:10px;color:#2b2b2b;white-space:nowrap;transform:scaleX(0.8981);transform-origin:0 50%;text-decoration:underline;text-decoration-thickness:0.6px;text-underline-offset:0.6px;-webkit-text-stroke:0.12px #2b2b2b;">Партнер</div>
<div id="t75" class="abs" style="left:383.00px;top:217.20px;font-size:7.4px;line-height:10px;height:10px;color:#2b2b2b;white-space:nowrap;transform:scaleX(0.8919);transform-origin:0 50%;-webkit-text-stroke:0.12px #2b2b2b;">13.01.2016</div>
<div id="t76" class="abs" style="left:462.65px;top:217.20px;font-size:7.4px;line-height:10px;height:10px;color:#2b2b2b;white-space:nowrap;transform:scaleX(0.8804);transform-origin:0 50%;-webkit-text-stroke:0.12px #2b2b2b;">teh-vest@teh-vest.ru</div>
<div id="t77" class="abs" style="left:542.30px;top:217.20px;font-size:7.4px;line-height:10px;height:10px;color:#2b2b2b;white-space:nowrap;transform:scaleX(0.8912);transform-origin:0 50%;-webkit-text-stroke:0.12px #2b2b2b;">85345646636</div>
<div id="t78" class="abs" style="left:621.80px;top:217.20px;font-size:7.4px;line-height:10px;height:10px;color:#2b2b2b;white-space:nowrap;transform:scaleX(0.9001);transform-origin:0 50%;text-decoration:underline;text-decoration-thickness:0.6px;text-underline-offset:0.6px;-webkit-text-stroke:0.12px #2b2b2b;">Сапожников Борис И...</div>
<div class="rl" style="top:230.80px"></div>
<div id="t79" class="abs" style="left:144.40px;top:235.88px;font-size:7.4px;line-height:10px;height:10px;color:#2b2b2b;white-space:nowrap;transform:scaleX(0.8968);transform-origin:0 50%;text-decoration:underline;text-decoration-thickness:0.6px;text-underline-offset:0.6px;-webkit-text-stroke:0.12px #2b2b2b;">ООО "Городской цент...</div>
<div id="t80" class="abs" style="left:224.00px;top:235.88px;font-size:7.4px;line-height:10px;height:10px;color:#2b2b2b;white-space:nowrap;transform:scaleX(0.9287);transform-origin:0 50%;text-decoration:underline;text-decoration-thickness:0.6px;text-underline-offset:0.6px;-webkit-text-stroke:0.12px #2b2b2b;">Новый</div>
<div id="t81" class="abs" style="left:303.30px;top:235.88px;font-size:7.4px;line-height:10px;height:10px;color:#2b2b2b;white-space:nowrap;transform:scaleX(0.8981);transform-origin:0 50%;text-decoration:underline;text-decoration-thickness:0.6px;text-underline-offset:0.6px;-webkit-text-stroke:0.12px #2b2b2b;">Партнер</div>
<div id="t82" class="abs" style="left:383.00px;top:235.88px;font-size:7.4px;line-height:10px;height:10px;color:#2b2b2b;white-space:nowrap;transform:scaleX(0.8919);transform-origin:0 50%;-webkit-text-stroke:0.12px #2b2b2b;">18.02.2016</div>
<div id="t83" class="abs" style="left:462.65px;top:235.88px;font-size:7.4px;line-height:10px;height:10px;color:#2b2b2b;white-space:nowrap;transform:scaleX(0.8782);transform-origin:0 50%;-webkit-text-stroke:0.12px #2b2b2b;">gcn@gcm.ru</div>
<div id="t84" class="abs" style="left:542.30px;top:235.88px;font-size:7.4px;line-height:10px;height:10px;color:#2b2b2b;white-space:nowrap;transform:scaleX(0.8912);transform-origin:0 50%;-webkit-text-stroke:0.12px #2b2b2b;">84952324235</div>
<div id="t85" class="abs" style="left:621.80px;top:235.88px;font-size:7.4px;line-height:10px;height:10px;color:#2b2b2b;white-space:nowrap;transform:scaleX(0.8921);transform-origin:0 50%;text-decoration:underline;text-decoration-thickness:0.6px;text-underline-offset:0.6px;-webkit-text-stroke:0.12px #2b2b2b;">Иванов Борис Иванов...</div>
<div class="abs" style="left:127px;top:246.6px;width:616px;height:30px;background:#fff"></div>
<div class="abs" style="left:141px;top:246px;width:586px;height:1px;background:#e2e8ed"></div>
<div class="abs" style="left:140.7px;top:119px;width:1px;height:127.5px;background:#e2e6ea"></div>
<div class="abs" style="left:727px;top:119.3px;width:2.05px;height:127.2px;background:linear-gradient(to bottom,#8a8a8a 0,#8a8a8a 71.2px,#0a0a0a 71.2px,#0a0a0a 100%)"></div>
<div class="abs" style="left:717.6px;top:179.75px;width:9.3px;height:9.75px;border:1px solid #e1e5e9;border-radius:2px;background:#fff"></div>
<svg class="abs" style="left:720.4px;top:184px" width="4" height="2.6" viewBox="0 0 4 2.6"><path d="M0,0 H4 L2,2.5 Z" fill="#333"/></svg>
<div id="t86" class="abs" style="left:143.80px;top:252.40px;font-size:6.2px;line-height:10px;height:10px;color:#c6d2dc;white-space:nowrap;transform:scaleX(0.9152);transform-origin:0 50%;">29 записей</div>
<div id="t87" class="abs" style="left:696.70px;top:252.40px;font-size:6.2px;line-height:10px;height:10px;color:#c6d2dc;white-space:nowrap;transform:scaleX(0.9195);transform-origin:0 50%;">3 страницы</div>
<div class="abs" style="left:419px;top:261.5px;width:32.5px;height:16px;border:1px solid #d6dce2;border-radius:2.5px;background:#fff"></div>
<div id="t88" class="abs" style="left:425.00px;top:264.20px;font-size:7.4px;line-height:10px;height:10px;color:#444;white-space:nowrap;">1</div>
<svg class="abs" style="left:0;top:0" width="900" height="446" viewBox="0 0 900 446"><polygon points="402.8,267.7 400.2,269.3 402.8,270.90000000000003" fill="#86b7d9"/><polygon points="405.20000000000005,267.7 402.6,269.3 405.20000000000005,270.90000000000003" fill="#86b7d9"/><polygon points="415.1,267.7 412.5,269.3 415.1,270.90000000000003" fill="#86b7d9"/><polygon points="456.5,267.7 459.1,269.3 456.5,270.90000000000003" fill="#2a7db8"/><polygon points="466.2,267.7 468.8,269.3 466.2,270.90000000000003" fill="#2a7db8"/><polygon points="468.6,267.7 471.20000000000005,269.3 468.6,270.90000000000003" fill="#2a7db8"/></svg>
<div class="abs" style="left:737.1px;top:232.6px;width:13.4px;height:13.4px;border-radius:50%;background:#fff"></div>
<svg class="abs" style="left:744.9px;top:237.4px" width="2.8" height="4.4" viewBox="0 0 2.8 4.4"><path d="M0,0 L2.7,2.2 L0,4.4 Z" fill="#6f90b4"/></svg>
<div id="right" class="abs"></div>
<div id="t89" class="abs" style="left:773.00px;top:44.50px;font-size:7.4px;line-height:10px;height:10px;color:#222;white-space:nowrap;transform:scaleX(0.9481);transform-origin:0 50%;-webkit-text-stroke:0.15px #222;">Быстрый</div>
<div id="t90" class="abs" style="left:835.30px;top:44.50px;font-size:7.4px;line-height:10px;height:10px;color:#2f6fb0;white-space:nowrap;transform:scaleX(0.8992);transform-origin:0 50%;">Расширенный</div>
<div class="abs" style="left:753px;top:59px;width:69.5px;height:1.6px;background:#3ea3c8"></div>
<div class="abs" style="left:822.5px;top:59.4px;width:70.5px;height:1px;background:#b9dcec"></div>
<div id="t91" class="abs" style="left:760.20px;top:64.60px;font-size:7.4px;line-height:10px;height:10px;color:#6e889e;white-space:nowrap;transform:scaleX(0.9170);transform-origin:0 50%;-webkit-text-stroke:0.15px #6e889e;">Ответственный</div>
<svg class="abs" style="left:878.7px;top:66.50px" width="7" height="5" viewBox="0 0 7 5"><path d="M0.8,0.9 L3.5,3.5 L6.2,0.9" fill="none" stroke="#4d82ad" stroke-width="1.5"/></svg>
<div class="fl" style="top:78.22px"></div>
<div id="t92" class="abs" style="left:760.20px;top:83.32px;font-size:7.4px;line-height:10px;height:10px;color:#6e889e;white-space:nowrap;transform:scaleX(0.8642);transform-origin:0 50%;-webkit-text-stroke:0.15px #6e889e;">Статус</div>
<svg class="abs" style="left:878.7px;top:85.22px" width="7" height="5" viewBox="0 0 7 5"><path d="M0.8,0.9 L3.5,3.5 L6.2,0.9" fill="none" stroke="#4d82ad" stroke-width="1.5"/></svg>
<div class="fl" style="top:96.94px"></div>
<div id="t93" class="abs" style="left:760.20px;top:102.04px;font-size:7.4px;line-height:10px;height:10px;color:#6e889e;white-space:nowrap;transform:scaleX(0.9330);transform-origin:0 50%;-webkit-text-stroke:0.15px #6e889e;">Источник возникновения</div>
<svg class="abs" style="left:878.7px;top:103.94px" width="7" height="5" viewBox="0 0 7 5"><path d="M0.8,0.9 L3.5,3.5 L6.2,0.9" fill="none" stroke="#4d82ad" stroke-width="1.5"/></svg>
<div class="fl" style="top:115.66px"></div>
<div id="t94" class="abs" style="left:760.20px;top:120.76px;font-size:7.4px;line-height:10px;height:10px;color:#6e889e;white-space:nowrap;transform:scaleX(0.9038);transform-origin:0 50%;-webkit-text-stroke:0.15px #6e889e;">Дата</div>
<svg class="abs" style="left:878.7px;top:122.66px" width="7" height="5" viewBox="0 0 7 5"><path d="M0.8,0.9 L3.5,3.5 L6.2,0.9" fill="none" stroke="#4d82ad" stroke-width="1.5"/></svg>
<div class="fl" style="top:134.38px"></div>
<div id="t95" class="abs" style="left:760.20px;top:139.48px;font-size:7.4px;line-height:10px;height:10px;color:#6e889e;white-space:nowrap;transform:scaleX(0.8902);transform-origin:0 50%;-webkit-text-stroke:0.15px #6e889e;">Рабочий телефон</div>
<svg class="abs" style="left:878.7px;top:141.38px" width="7" height="5" viewBox="0 0 7 5"><path d="M0.8,0.9 L3.5,3.5 L6.2,0.9" fill="none" stroke="#4d82ad" stroke-width="1.5"/></svg>
<div class="fl" style="top:153.10px"></div>
<div id="t96" class="abs" style="left:760.20px;top:158.20px;font-size:7.4px;line-height:10px;height:10px;color:#6e889e;white-space:nowrap;transform:scaleX(0.8548);transform-origin:0 50%;-webkit-text-stroke:0.15px #6e889e;">Email</div>
<svg class="abs" style="left:878.7px;top:160.10px" width="7" height="5" viewBox="0 0 7 5"><path d="M0.8,0.9 L3.5,3.5 L6.2,0.9" fill="none" stroke="#4d82ad" stroke-width="1.5"/></svg>
<div class="fl" style="top:171.82px"></div>
<div id="t97" class="abs" style="left:760.20px;top:176.92px;font-size:7.4px;line-height:10px;height:10px;color:#6e889e;white-space:nowrap;transform:scaleX(0.8961);transform-origin:0 50%;-webkit-text-stroke:0.15px #6e889e;">Название</div>
<svg class="abs" style="left:878.7px;top:178.82px" width="7" height="5" viewBox="0 0 7 5"><path d="M0.8,0.9 L3.5,3.5 L6.2,0.9" fill="none" stroke="#4d82ad" stroke-width="1.5"/></svg>
<div class="fl" style="top:190.54px"></div>
<svg class="abs" style="left:756.3px;top:198.3px" width="6" height="6" viewBox="0 0 6 6"><path d="M0.8,0.8 L5.2,5.2 M5.2,0.8 L0.8,5.2" stroke="#2a8fd0" stroke-width="1.6"/></svg>
<div id="t98" class="abs" style="left:764.00px;top:198.90px;font-size:7.4px;line-height:4.6px;height:4.6px;color:#2a8fd0;white-space:nowrap;transform:scaleX(0.8825);transform-origin:0 50%;border-bottom:1px dotted #b4d6ec;">Сбросить</div>
<div class="abs" style="left:0;top:444.7px;width:900px;height:1.3px;background:#d4d6d8"></div>
<svg class="abs" style="left:890px;top:0" width="10" height="446" viewBox="0 0 10 446"><defs><linearGradient id="rb" x1="0" x2="0" y1="0" y2="1"><stop offset="0" stop-color="#c6c6c6"/><stop offset="0.06" stop-color="#a4a4a4"/><stop offset="0.11" stop-color="#848486"/><stop offset="0.47" stop-color="#646468"/><stop offset="0.8" stop-color="#4e4e52"/><stop offset="1" stop-color="#3a3a3c"/></linearGradient></defs><rect x="7.4" y="0" width="2.6" height="446" fill="url(#rb)"/></svg>
</body></html>
